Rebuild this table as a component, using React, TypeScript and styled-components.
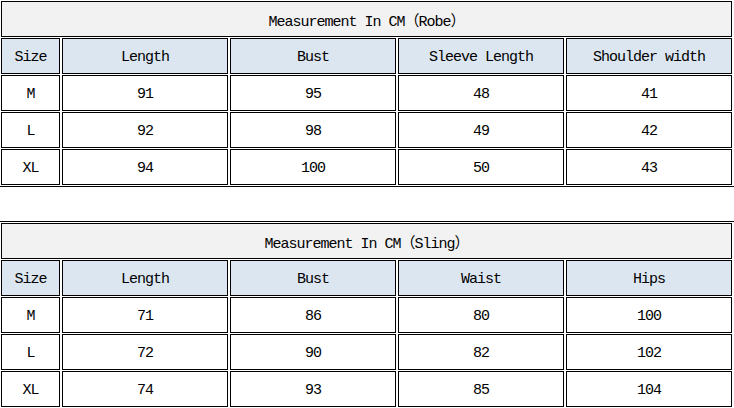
import styled, { createGlobalStyle } from 'styled-components'

const GlobalStyle = createGlobalStyle`
  html, body {
    margin: 0;
    padding: 0;
    background: #ffffff;
    overflow: hidden;
  }
`

const Page = styled.div`
  display: flex;
  flex-direction: column;
  gap: 34px;
  margin: -1px 0 0 -2px;
  font-family: "Liberation Mono", "Noto Sans CJK SC", monospace;
  font-size: 15px;
  letter-spacing: -1px;
  color: #000;
`

const SizeTable = styled.table`
  width: 737px;
  border: 1px solid #000;
  border-collapse: separate;
  border-spacing: 2px 1px;
`

const TitleCell = styled.th`
  height: 32px;
  padding: 2px 0 0;
  border: 1px solid #000;
  background: #f2f2f2;
  font-weight: normal;
  text-align: center;
`

const HeadCell = styled.th<{ $narrow?: boolean }>`
  width: ${p => (p.$narrow ? '57px' : '164px')};
  height: 32px;
  padding: 2px 0 0;
  border: 1px solid #000;
  background: #dce6f1;
  font-weight: normal;
  text-align: center;
`

const Cell = styled.td`
  height: 32px;
  padding: 2px 0 0;
  border: 1px solid #000;
  background: #fff;
  text-align: center;
`

type Chart = {
  title: string
  columns: string[]
  rows: (string | number)[][]
}

const charts: Chart[] = [
  {
    title: 'Measurement In CM（Robe）',
    columns: ['Size', 'Length', 'Bust', 'Sleeve Length', 'Shoulder width'],
    rows: [
      ['M', 91, 95, 48, 41],
      ['L', 92, 98, 49, 42],
      ['XL', 94, 100, 50, 43],
    ],
  },
  {
    title: 'Measurement In CM（Sling）',
    columns: ['Size', 'Length', 'Bust', 'Waist', 'Hips'],
    rows: [
      ['M', 71, 86, 80, 100],
      ['L', 72, 90, 82, 102],
      ['XL', 74, 93, 85, 104],
    ],
  },
]

function MeasureTable({ chart }: { chart: Chart }) {
  return (
    <SizeTable>
      <thead>
        <tr>
          <TitleCell colSpan={chart.columns.length}>{chart.title}</TitleCell>
        </tr>
        <tr>
          {chart.columns.map((c, i) => (
            <HeadCell key={c} $narrow={i === 0}>{c}</HeadCell>
          ))}
        </tr>
      </thead>
      <tbody>
        {chart.rows.map(row => (
          <tr key={String(row[0])}>
            {row.map((v, i) => (
              <Cell key={i}>{v}</Cell>
            ))}
          </tr>
        ))}
      </tbody>
    </SizeTable>
  )
}

export default function App() {
  return (
    <>
      <GlobalStyle />
      <Page>
        {charts.map(c => (
          <MeasureTable key={c.title} chart={c} />
        ))}
      </Page>
    </>
  )
}
